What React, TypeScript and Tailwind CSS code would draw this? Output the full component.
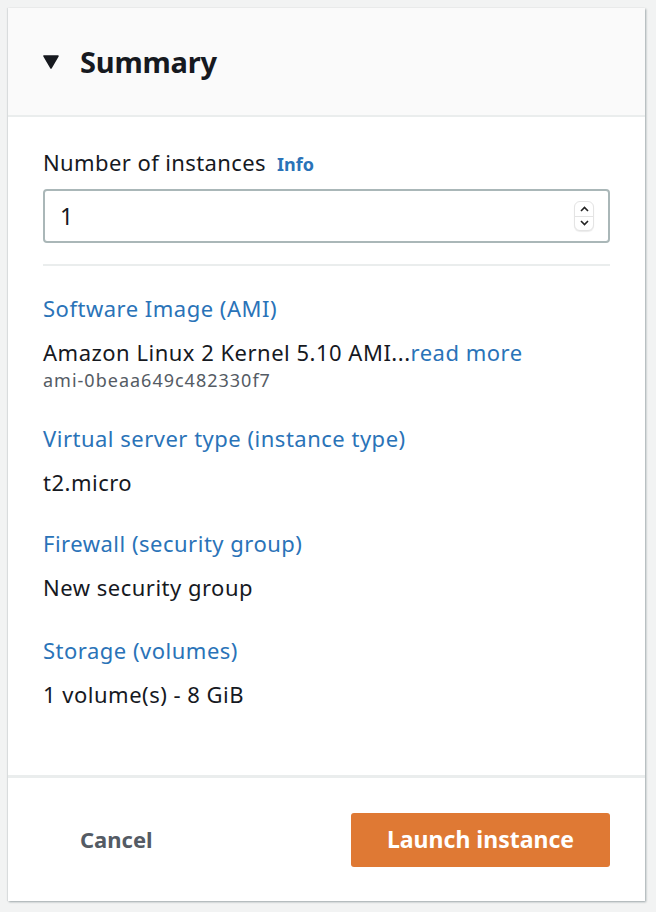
import React from "react";

const FONT = { fontFamily: '"Noto Sans", "Open Sans", Arial, sans-serif' };

function Field({ label, children }: { label: string; children: React.ReactNode }) {
  return (
    <div className="flex flex-col">
      <p className="text-[22px] leading-[30px] tracking-[0.5px] text-[#2a73b8]">{label}</p>
      <div className="mt-[14px]">{children}</div>
    </div>
  );
}

function Stepper() {
  return (
    <div className="flex h-[30px] w-[20px] flex-col overflow-hidden rounded-[6px] border border-[#e4e4e4] bg-white shadow-[0_1px_1px_rgba(0,0,0,0.08)]">
      <div className="flex flex-1 items-center justify-center border-b border-[#e4e4e4]">
        <svg width="9" height="6" viewBox="0 0 9 6">
          <path d="M1 5 L4.5 1.5 L8 5" fill="none" stroke="#222" strokeWidth="1.6" />
        </svg>
      </div>
      <div className="flex flex-1 items-center justify-center">
        <svg width="9" height="6" viewBox="0 0 9 6">
          <path d="M1 1 L4.5 4.5 L8 1" fill="none" stroke="#222" strokeWidth="1.6" />
        </svg>
      </div>
    </div>
  );
}

export default function App() {
  return (
    <div className="min-h-[912px] w-[656px] bg-[#f2f3f3] pl-[8px] pt-[8px] pb-[11px]" style={FONT}>
      <div className="flex w-[637px] flex-col bg-white shadow-[1px_1px_2px_rgba(0,28,36,0.35),-1px_0_1px_rgba(0,28,36,0.08)]">
        <div className="flex h-[109px] items-center border-b-2 border-[#eaeded] bg-[#fafafa] pl-[35px]">
          <svg width="16" height="14" viewBox="0 0 16 14" className="mr-[21px]">
            <path d="M1 1 H15 L8 13 Z" fill="#16191f" stroke="#16191f" strokeWidth="1.5" strokeLinejoin="round" />
          </svg>
          <h2 className="text-[29px] font-bold leading-none tracking-[-0.2px] text-[#16191f]">Summary</h2>
        </div>

        <div className="flex flex-col px-[35px] pt-[30px]">
          <div className="flex items-baseline">
            <span className="text-[22px] leading-[30px] tracking-[0.4px] text-[#16191f]">Number of instances</span>
            <span className="ml-[11px] text-[18px] font-bold text-[#2a73b8]">Info</span>
          </div>
          <div className="mt-[11px] flex h-[54px] items-center justify-between rounded-[4px] border-2 border-[#aab7b8] pl-[15px] pr-[14px]">
            <span className="text-[23px] text-[#16191f]">1</span>
            <Stepper />
          </div>
          <div className="mt-[21px] h-[2px] bg-[#eaeded]" />

          <div className="mt-[27px] flex flex-col gap-[31px]">
            <Field label="Software Image (AMI)">
              <p className="text-[22px] leading-[30px] tracking-[0.5px] text-[#16191f]">
                Amazon Linux 2 Kernel 5.10 AMI...<span className="text-[#2a73b8]">read more</span>
              </p>
              <p className="mt-[1px] text-[18px] leading-[24px] tracking-[1px] text-[#545b64]">ami-0beaa649c482330f7</p>
            </Field>
            <Field label="Virtual server type (instance type)">
              <p className="text-[22px] leading-[30px] tracking-[0.5px] text-[#16191f]">t2.micro</p>
            </Field>
            <Field label="Firewall (security group)">
              <p className="text-[22px] leading-[30px] tracking-[0.5px] text-[#16191f]">New security group</p>
            </Field>
            <div className="mt-[2px]">
              <Field label="Storage (volumes)">
                <p className="text-[22px] leading-[30px] tracking-[0.5px] text-[#16191f]">1 volume(s) - 8 GiB</p>
              </Field>
            </div>
          </div>
        </div>

        <div className="mt-[66px] h-[3px] bg-[#eaeded]" />

        <div className="flex h-[123px] items-center justify-between pl-[72px] pr-[35px]">
          <button className="text-[22px] font-bold text-[#545b64]">Cancel</button>
          <button className="flex h-[54px] w-[259px] items-center justify-center rounded-[3px] bg-[#df7934] text-[23px] font-bold text-white">
            Launch instance
          </button>
        </div>
      </div>
    </div>
  );
}
